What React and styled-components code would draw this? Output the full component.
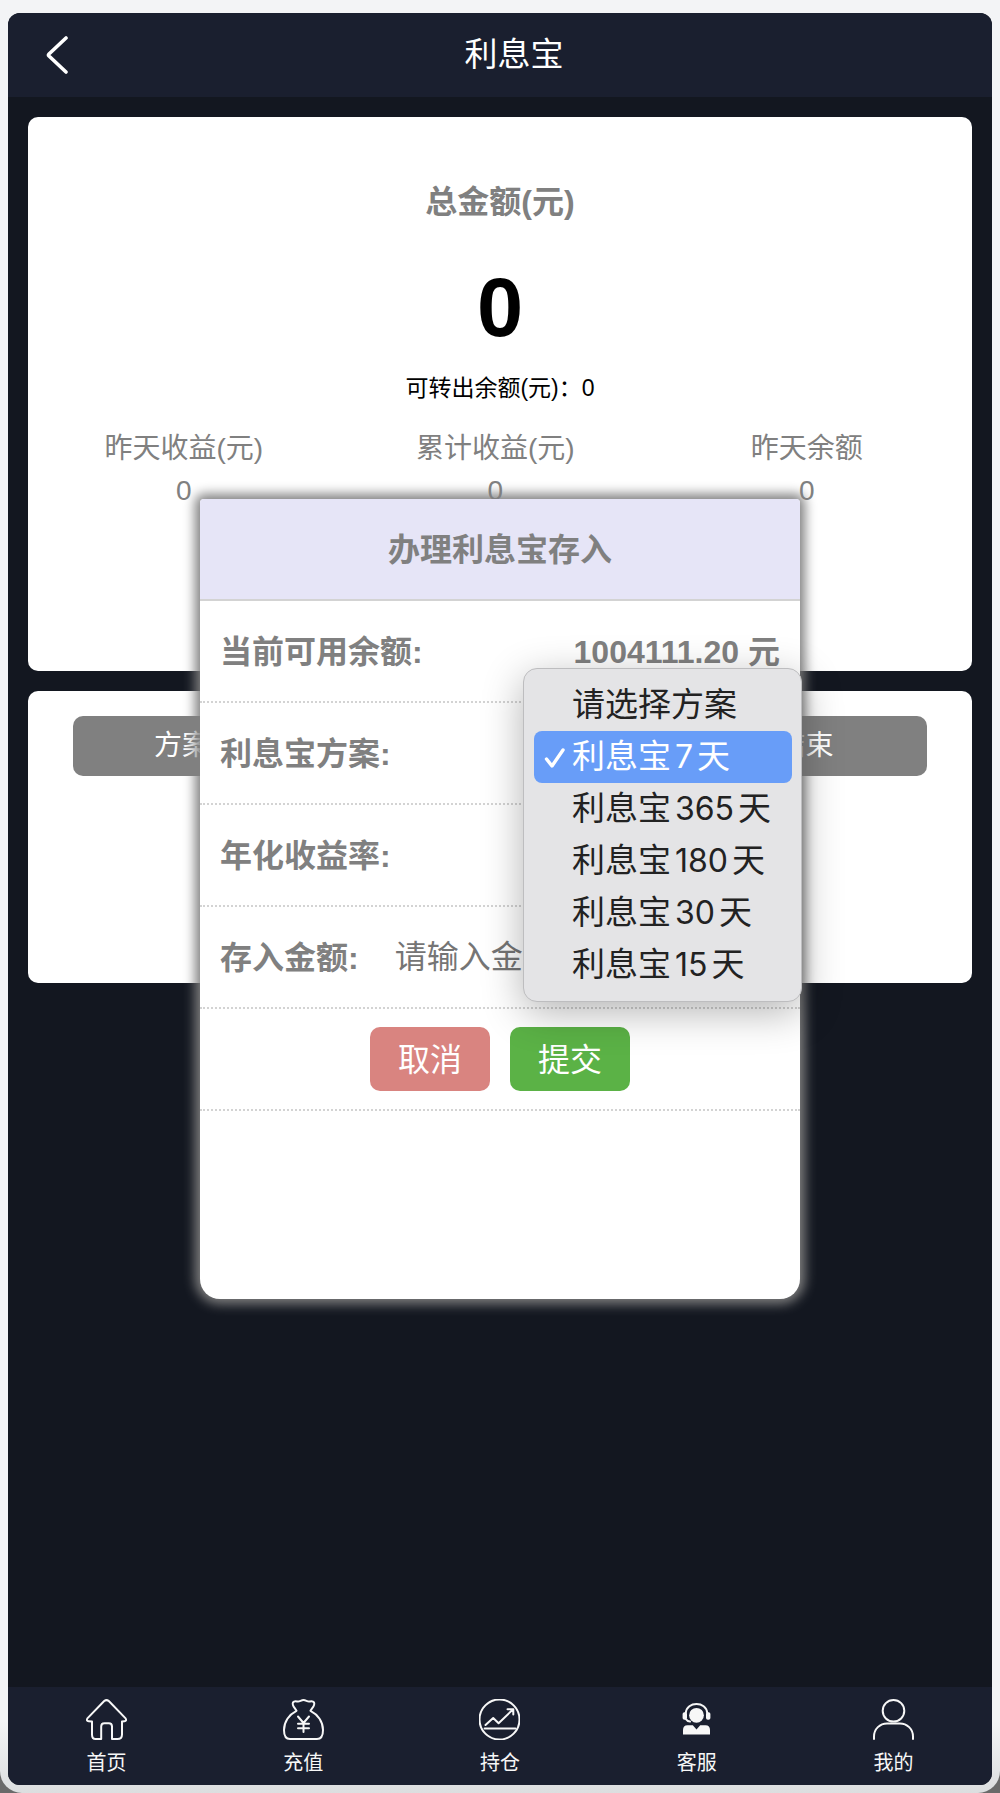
import React, { useState } from "react"
import styled, { createGlobalStyle, css } from "styled-components"

const fontStack = `"Liberation Sans", "Noto Sans CJK SC", sans-serif`
const menuFontStack = `Inter, "Noto Sans CJK SC", sans-serif`

const barColor = "#1a1f2f"
const pageColor = "#131720"
const mutedColor = "#808080"

const GlobalStyle = createGlobalStyle`
  * {
    box-sizing: border-box;
  }

  body {
    margin: 0;
    background: #6a6a6a;
    font-family: ${fontStack};
  }

  h1,
  h2,
  p,
  ul,
  dl,
  dd {
    margin: 0;
    padding: 0;
  }

  button,
  input,
  select {
    font-family: inherit;
  }
`

const Frame = styled.div`
  display: flex;
  min-height: 100vh;
  padding: 13px 8px 8px;
  border-radius: 0 0 22px 22px;
  background: linear-gradient(#f3f4f6 0%, #f3f4f6 96%, #dcdedf 100%);
`

const Screen = styled.div`
  position: relative;
  display: flex;
  flex: 1;
  flex-direction: column;
  overflow: hidden;
  border-radius: 12px;
  background: ${pageColor};
`

const Header = styled.header`
  display: flex;
  align-items: center;
  height: 84px;
  padding: 0 68px 0 28px;
  background: ${barColor};
`

const BackButton = styled.button`
  display: flex;
  width: 68px;
  padding: 0 0 0 10px;
  border: 0;
  background: none;
  color: #fff;
  cursor: pointer;
`

const Title = styled.h1`
  flex: 1;
  color: #fff;
  font-size: 33px;
  font-weight: 400;
  line-height: 48px;
  text-align: center;
`

const Main = styled.main`
  display: flex;
  flex: 1;
  flex-direction: column;
  gap: 20px;
  padding: 20px;
`

const Card = styled.section`
  border-radius: 10px;
  background: #fff;
`

const SummaryCard = styled(Card)`
  padding: 61px 0 159px;
  text-align: center;
`

const SummaryTitle = styled.h2`
  color: ${mutedColor};
  font-size: 32px;
  line-height: 48px;
`

const TotalAmount = styled.p`
  margin-top: 42px;
  color: #000;
  font-size: 83px;
  font-weight: 700;
  line-height: 80px;
`

const Transferable = styled.p`
  margin: 22px 0;
  color: #000;
  font-size: 23px;
  line-height: 36px;
`

const Stats = styled.dl`
  display: grid;
  grid-template-columns: repeat(3, 33%);
  color: ${mutedColor};
  font-size: 28px;
  line-height: 42px;
`

const PlanCard = styled(Card)`
  min-height: 292px;
  padding: 25px 45px;
`

const PlanHeader = styled.div`
  display: grid;
  grid-template-columns: repeat(3, 33%);
  border-radius: 10px;
  background: ${mutedColor};
  color: #fff;
  font-size: 28px;
  line-height: 60px;
  text-align: center;
`

const Overlay = styled.div`
  position: absolute;
  inset: 0;
  display: flex;
  align-items: center;
  justify-content: center;
`

const Dialog = styled.form`
  width: 61%;
  max-width: 600px;
  min-height: 800px;
  border-radius: 4px 4px 20px 20px;
  background: #fff;
  box-shadow: 0 0 12px 5px ${mutedColor};
  color: ${mutedColor};
  font-size: 32px;
`

const rowBase = css`
  display: flex;
  align-items: center;
  height: 102px;
  padding: 0 20px;
`

const DialogTitle = styled.h2`
  ${rowBase}
  justify-content: center;
  padding-bottom: 4px;
  border-bottom: 2px solid #d3d3d3;
  border-radius: 4px 4px 0 0;
  background: #e6e5f7;
  font-size: 32px;
`

const Row = styled.div`
  ${rowBase}
  justify-content: ${props => props.$justify || "space-between"};
  gap: ${props => props.$gap || "0"};
  border-bottom: 2px dotted #d3d3d3;
`

const Label = styled.label`
  flex: none;
  padding-bottom: 4px;
  font-weight: 700;
`

const Value = styled.output`
  padding-bottom: 4px;
  font-weight: 700;
`

const AmountInput = styled.input`
  flex: 1;
  min-width: 0;
  height: 60px;
  padding: 0;
  border: 0;
  outline: 0;
  background: none;
  color: #333;
  font-size: 32px;

  &::placeholder {
    color: #757575;
  }
`

const SelectWrapper = styled.div`
  position: relative;
  display: flex;
  align-items: center;
  width: 240px;
  height: 100px;
`

const PlanSelect = styled.select`
  width: 100%;
  border: 0;
  background: #fff;
  color: ${mutedColor};
  font-size: 32px;
`

const Menu = styled.ul`
  position: absolute;
  top: -35px;
  right: -22px;
  width: 279px;
  padding: 10px 9px 10px 10px;
  border: 1px solid #bdbdbf;
  border-radius: 14px;
  background: #e4e4e6;
  box-shadow: 0 10px 40px rgba(0, 0, 0, 0.3);
  font-family: ${menuFontStack};
  list-style: none;
`

const MenuItem = styled.li`
  display: grid;
  grid-template-columns: 38px 1fr;
  align-items: center;
  height: 52px;
  padding-bottom: 2px;
  border-radius: 8px;
  background: ${props => (props.$selected ? "#689df8" : "transparent")};
  color: ${props => (props.$selected ? "#fff" : "#222")};
  font-size: 33px;
  line-height: 50px;
  white-space: nowrap;
  cursor: default;
`

const CheckSlot = styled.span`
  display: flex;
  padding: 2px 0 0 10px;
`

const Days = styled.span`
  margin: 0 4px;
  font-size: 32px;
`

const ActionButton = styled.button`
  width: 120px;
  height: 64px;
  padding: 0 0 4px;
  border: 0;
  border-radius: 10px;
  background: ${props => (props.$primary ? "#5bb246" : "#d98480")};
  color: #fff;
  font-size: 32px;
  cursor: pointer;
`

const TabBar = styled.nav`
  display: flex;
  height: 98px;
  background: ${barColor};
`

const Tab = styled.a`
  display: flex;
  flex: 1;
  flex-direction: column;
  align-items: center;
  gap: 8px;
  padding-top: 12px;
  color: #f7f7f7;
  font-size: 20px;
  line-height: 30px;
  text-decoration: none;
`

const BackIcon = () => (
  <svg width="22" height="38" viewBox="0 0 22 38" fill="none">
    <path
      d="M20 2 L3 18 Q2 19 3 20 L20 36"
      stroke="currentColor"
      strokeWidth="3.6"
      strokeLinecap="round"
    />
  </svg>
)

const CheckIcon = () => (
  <svg width="22" height="22" viewBox="0 0 22 22" fill="none">
    <path
      d="M2.5 12 L8 19 L19 3"
      stroke="currentColor"
      strokeWidth="3.4"
      strokeLinecap="round"
      strokeLinejoin="round"
    />
  </svg>
)

const TabIcon = ({ children }) => (
  <svg
    width="41"
    height="41"
    viewBox="0 0 41 41"
    fill="none"
    stroke="currentColor"
    strokeWidth="2"
    strokeLinecap="round"
    strokeLinejoin="round"
  >
    {children}
  </svg>
)

const HomeIcon = () => (
  <TabIcon>
    <path d="M18.2 2 Q20.5 0.2 22.8 2 L39.6 19.4 Q41 22 38.4 22.2 L36 22.6 V35.5 Q36 40 31.5 40 H26 V27.5 Q26 24.2 22.8 24.2 H18.4 Q15.2 24.2 15.2 27.5 V40 H9.5 Q6 40 6 35.5 V22.6 L2.6 22.2 Q0 22 1.4 19.4 Z" />
  </TabIcon>
)

const MoneyBagIcon = () => (
  <TabIcon>
    <path d="M13.5 11.8 C12 9 8.5 6 10 3.4 C11.4 1.4 13.4 2.4 15 2.6 C17 2.4 18.4 1 20.5 1 C22.6 1 24 2.4 26 2.6 C27.6 2.4 29.6 1.4 31 3.4 C32.5 6 29 9 27.5 11.8 C35 15.5 40 23 40 31 C40 37 38 40 34 40 H7 C3 40 1 37 1 31 C1 23 6 15.5 13.5 11.8 Z" />
    <path d="M15 17.5 L20.5 24 L26 17.5 M20.5 24 V33 M15 24.8 H26 M15 29.2 H26" />
  </TabIcon>
)

const ChartIcon = () => (
  <TabIcon>
    <circle cx="20.5" cy="20.5" r="20" />
    <path d="M6.5 26 L14.2 19 L19.6 24.2 L33.8 10.6 M28.5 10.3 H34.3 V15.6 M5.6 29.6 H36.4" />
  </TabIcon>
)

const ServiceIcon = () => (
  <TabIcon>
    <g fill="currentColor" stroke="none">
      <circle cx="20.5" cy="16.3" r="7.4" />
      <rect x="6.6" y="13.2" width="4.4" height="7.6" rx="1.8" />
      <rect x="30" y="13.2" width="4.4" height="7.6" rx="1.8" />
      <path d="M7 35.6 V31 Q7 26.2 11.5 26.2 H16.8 L20.5 30.4 L24.2 26.2 H29.5 Q34 26.2 34 31 V35.6 Z" />
    </g>
    <path d="M9.8 14 C10.6 1.9 30.4 1.9 31.2 14 M10 20.2 Q11.4 22.4 14 22.6" />
  </TabIcon>
)

const UserIcon = () => (
  <TabIcon>
    <circle cx="20.5" cy="11.8" r="10.8" />
    <path d="M1 40 V37.5 C1 30 7 24.4 14 24.4 H27 C34 24.4 40 30 40 37.5 V40" />
  </TabIcon>
)

const stats = [
  { label: "昨天收益(元)", value: 0 },
  { label: "累计收益(元)", value: 0 },
  { label: "昨天余额", value: 0 },
]

const plans = [7, 365, 180, 30, 15]

const tabs = [
  { label: "首页", icon: HomeIcon },
  { label: "充值", icon: MoneyBagIcon },
  { label: "持仓", icon: ChartIcon },
  { label: "客服", icon: ServiceIcon },
  { label: "我的", icon: UserIcon },
]

const PlanPicker = () => {
  const [plan, setPlan] = useState("7")

  return (
    <SelectWrapper>
      <PlanSelect
        id="plan"
        value={plan}
        onChange={event => setPlan(event.target.value)}
      >
        <option value="">请选择方案</option>
        {plans.map(days => (
          <option key={days} value={String(days)}>
            利息宝{days}天
          </option>
        ))}
      </PlanSelect>
      <Menu role="listbox" aria-label="利息宝方案">
        <MenuItem
          role="option"
          aria-selected={plan === ""}
          $selected={plan === ""}
          onClick={() => setPlan("")}
        >
          <CheckSlot>{plan === "" && <CheckIcon />}</CheckSlot>
          <span>请选择方案</span>
        </MenuItem>
        {plans.map(days => {
          const selected = plan === String(days)
          return (
            <MenuItem
              key={days}
              role="option"
              aria-selected={selected}
              $selected={selected}
              onClick={() => setPlan(String(days))}
            >
              <CheckSlot>{selected && <CheckIcon />}</CheckSlot>
              <span>
                利息宝<Days>{days}</Days>天
              </span>
            </MenuItem>
          )
        })}
      </Menu>
    </SelectWrapper>
  )
}

const DepositDialog = () => (
  <Overlay>
    <Dialog
      role="dialog"
      aria-labelledby="deposit-title"
      onSubmit={event => event.preventDefault()}
    >
      <DialogTitle id="deposit-title">办理利息宝存入</DialogTitle>
      <Row>
        <Label htmlFor="balance">当前可用余额:</Label>
        <Value id="balance">1004111.20 元</Value>
      </Row>
      <Row>
        <Label htmlFor="plan">利息宝方案:</Label>
        <PlanPicker />
      </Row>
      <Row>
        <Label htmlFor="rate">年化收益率:</Label>
        <Value id="rate" />
      </Row>
      <Row $gap="36px">
        <Label htmlFor="amount">存入金额:</Label>
        <AmountInput id="amount" type="text" placeholder="请输入金额" />
      </Row>
      <Row $justify="center" $gap="20px">
        <ActionButton type="button">取消</ActionButton>
        <ActionButton type="submit" $primary>
          提交
        </ActionButton>
      </Row>
    </Dialog>
  </Overlay>
)

const App = () => (
  <>
    <GlobalStyle />
    <Frame>
      <Screen>
        <Header>
          <BackButton type="button" aria-label="返回">
            <BackIcon />
          </BackButton>
          <Title>利息宝</Title>
        </Header>
        <Main>
          <SummaryCard>
            <SummaryTitle>总金额(元)</SummaryTitle>
            <TotalAmount>0</TotalAmount>
            <Transferable>可转出余额(元)：0</Transferable>
            <Stats>
              {stats.map(({ label, value }) => (
                <div key={label}>
                  <dt>{label}</dt>
                  <dd>{value}</dd>
                </div>
              ))}
            </Stats>
          </SummaryCard>
          <PlanCard>
            <PlanHeader>
              <span>方案 名称</span>
              <span>金额</span>
              <span>是否结束</span>
            </PlanHeader>
          </PlanCard>
        </Main>
        <TabBar>
          {tabs.map(({ label, icon: Icon }) => (
            <Tab key={label} href="#">
              <Icon />
              {label}
            </Tab>
          ))}
        </TabBar>
        <DepositDialog />
      </Screen>
    </Frame>
  </>
)

export default App
